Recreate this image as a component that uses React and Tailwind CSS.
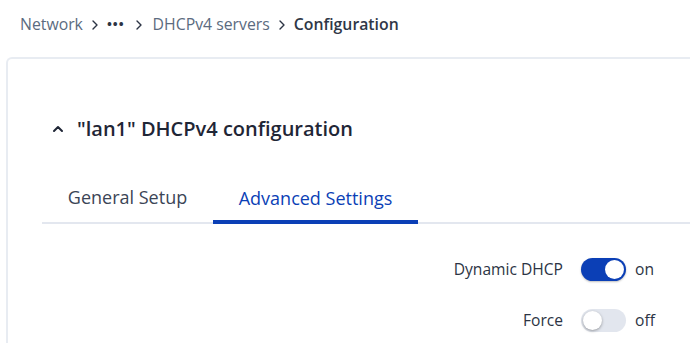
import React from "react";

function Chevron({ className }) {
  return (
    <svg className={className} width="10" height="12" viewBox="0 0 10 12" fill="none">
      <path d="M3 2 L7 6 L3 10" stroke="currentColor" strokeWidth="1.4" strokeLinecap="round" strokeLinejoin="round" />
    </svg>
  );
}

function Toggle({ on }) {
  return (
    <div
      className={
        on
          ? "relative w-[45px] h-[23px] rounded-full bg-[#0b3fb6] shadow-[0_1px_2px_rgba(0,0,0,0.25)]"
          : "relative w-[45px] h-[23px] rounded-full bg-[#e2e6ee]"
      }
    >
      <div
        className={
          on
            ? "absolute top-[2px] right-[2px] w-[19px] h-[19px] rounded-full bg-white"
            : "absolute top-[2px] left-[2px] w-[19px] h-[19px] rounded-full bg-white shadow-[0_1px_3px_rgba(0,0,0,0.35)]"
        }
      />
    </div>
  );
}

export default function App() {
  return (
    <div className="w-[690px] h-[343px] overflow-hidden bg-white font-['Open_Sans',sans-serif]">
      <div className="flex items-center h-[46px] pt-[3px] pl-[20px] text-[15.8px] text-[#5b6b80]">
        <span>Network</span>
        <Chevron className="mx-[7px] text-[#2c3444]" />
        <span className="text-[#2c3444] font-bold tracking-[1px] text-[13px]">•••</span>
        <Chevron className="mx-[9px] text-[#2c3444]" />
        <span>DHCPv4 servers</span>
        <Chevron className="mx-[7px] text-[#2c3444]" />
        <span className="font-semibold text-[#2f3747]">Configuration</span>
      </div>
      <div className="ml-[6px] mt-[11px] w-[700px] h-[300px] border-l-2 border-t-2 border-[#e8ecf2] rounded-tl-[6px]">
        <div className="flex items-center pl-[44px] pt-[57px] h-[83px]">
          <svg width="12" height="10" viewBox="0 0 12 10" fill="none" className="text-[#1f2636]">
            <path d="M2 7 L6 3 L10 7" stroke="currentColor" strokeWidth="2" strokeLinecap="round" strokeLinejoin="round" />
          </svg>
          <span className="ml-[13px] text-[20px] font-semibold text-[#1f2636] leading-none">"lan1" DHCPv4 configuration</span>
        </div>
        <div className="ml-[34px] mt-[34px] flex border-b-2 border-[#e3e7ef] h-[48px]">
          <div className="w-[171px] flex items-center justify-center text-[18px] text-[#3b4556] pb-[4px]">General Setup</div>
          <div className="w-[205px] flex items-center justify-center text-[18px] text-[#0b3fb6] border-b-4 border-[#0b3fb6] mb-[-2px]">Advanced Settings</div>
        </div>
        <div className="flex flex-col mt-[34px] gap-[28px] text-[15.6px] text-[#2c3444]">
          <div className="flex items-center h-[23px]">
            <div className="w-[555px] text-right">Dynamic DHCP</div>
            <div className="ml-[18px]"><Toggle on /></div>
            <span className="ml-[9px]">on</span>
          </div>
          <div className="flex items-center h-[23px]">
            <div className="w-[555px] text-right">Force</div>
            <div className="ml-[18px]"><Toggle /></div>
            <span className="ml-[9px]">off</span>
          </div>
        </div>
      </div>
    </div>
  );
}
